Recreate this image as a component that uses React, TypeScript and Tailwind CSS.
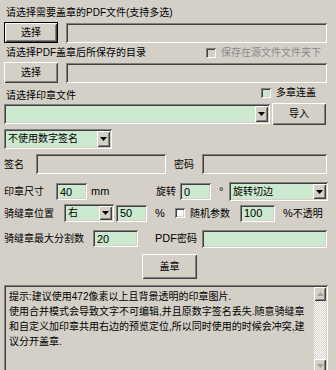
import React from "react";

const SUNK =
  "shadow-[inset_1px_1px_0_#808080,inset_-1px_-1px_0_#fff,inset_2px_2px_0_#404040,inset_-2px_-2px_0_#d4d0c8]";
const RAISED =
  "shadow-[inset_1px_1px_0_#fff,inset_-1px_-1px_0_#404040,inset_2px_2px_0_#d4d0c8,inset_-2px_-2px_0_#808080]";

const Button = ({ label, className = "" }: { label: string; className?: string }) => (
  <div className={`flex items-center justify-center bg-[#d4d0c8] ${RAISED} ${className}`}>
    <span className="leading-[14px]">{label}</span>
  </div>
);

const Field = ({
  value = "",
  className = "",
  green = true,
}: {
  value?: string;
  className?: string;
  green?: boolean;
}) => (
  <div
    className={`flex items-center pl-[4px] ${green ? "bg-[#cce8cf]" : "bg-[#d4d0c8]"} ${SUNK} ${className}`}
  >
    <span className="leading-[14px] text-[11px]">{value}</span>
  </div>
);

const Arrow = ({ color = "#000", up = false }: { color?: string; up?: boolean }) => (
  <svg width="7" height="4" viewBox="0 0 7 4">
    <path d={up ? "M3.5 0 L7 4 L0 4 Z" : "M0 0 L7 0 L3.5 4 Z"} fill={color} />
  </svg>
);

const Combo = ({ value, className = "" }: { value: string; className?: string }) => (
  <div className={`flex items-stretch bg-[#cce8cf] p-[2px] ${SUNK} ${className}`}>
    <div className="flex flex-1 items-center pl-[2px]">
      <span className="leading-[14px]">{value}</span>
    </div>
    <div className={`flex w-[13px] items-center justify-center bg-[#d4d0c8] ${RAISED}`}>
      <Arrow />
    </div>
  </div>
);

const Check = ({ className = "" }: { className?: string }) => (
  <div className={`h-[10px] w-[10px] ${SUNK} ${className}`} />
);

export default function App() {
  return (
    <div className="h-[370px] w-[336px] overflow-hidden bg-[#d4d0c8] text-[10px] text-black font-[Liberation_Sans,Noto_Sans_CJK_SC,sans-serif]">
      <div className="mt-[6px] h-[14px] pl-[6px] leading-[14px]">
        请选择需要盖章的PDF文件(支持多选)
      </div>

      <div className="mt-[2px] flex h-[21px] items-center">
        <div className="ml-[4px] h-[21px] w-[54px] border border-black">
          <Button label="选择" className="h-full w-full" />
        </div>
        <Field green={false} className="ml-[8px] h-[20px] w-[261px]" />
      </div>

      <div className="mt-[3px] flex h-[14px] items-center">
        <div className="w-[200px] pl-[6px] leading-[14px]">请选择PDF盖章后所保存的目录</div>
        <Check className="ml-[6px] bg-[#d4d0c8]" />
        <span className="ml-[5px] leading-[14px] text-[#8a8a8a]">保存在源文件文件夹下</span>
      </div>

      <div className="mt-[2px] flex h-[21px] items-center">
        <Button label="选择" className="ml-[4px] h-[21px] w-[54px]" />
        <Field green={false} className="ml-[8px] h-[20px] w-[261px]" />
      </div>

      <div className="mt-[4px] flex h-[14px] items-center">
        <div className="w-[261px] pl-[6px] pt-[3px] leading-[14px]">请选择印章文件</div>
        <Check className="mb-[3px] bg-[#cce8cf]" />
        <span className="mb-[3px] ml-[5px] leading-[14px]">多章连盖</span>
      </div>

      <div className="mt-[2px] flex h-[22px] items-center">
        <Combo value="" className="ml-[4px] h-[20px] w-[266px]" />
        <Button label="导入" className="ml-[2px] h-[22px] w-[54px]" />
      </div>

      <div className="mt-[4px] flex h-[20px] items-center">
        <Combo value="不使用数字签名" className="ml-[4px] h-[20px] w-[108px]" />
      </div>

      <div className="mt-[5px] flex h-[20px] items-center">
        <span className="w-[36px] pl-[4px]">签名</span>
        <Field green={false} className="h-[20px] w-[130px]" />
        <span className="ml-[8px] w-[28px]">密码</span>
        <Field green={false} className="h-[20px] w-[125px]" />
      </div>

      <div className="mt-[8px] flex h-[19px] items-center">
        <span className="w-[56px] pl-[4px]">印章尺寸</span>
        <Field value="40" className="h-[17px] w-[31px]" />
        <span className="ml-[4px] w-[65px] text-[11px]">mm</span>
        <span className="w-[24px]">旋转</span>
        <Field value="0" className="h-[17px] w-[31px]" />
        <span className="ml-[8px] w-[10px] text-[11px]">°</span>
        <Combo value="旋转切边" className="h-[19px] w-[99px]" />
      </div>

      <div className="mt-[3px] flex h-[18px] items-center">
        <span className="w-[64px] pl-[4px]">骑缝章位置</span>
        <Combo value="右" className="h-[18px] w-[50px]" />
        <Field value="50" className="ml-[2px] h-[17px] w-[31px]" />
        <span className="ml-[8px] w-[20px] text-[11px]">%</span>
        <Check className="bg-white" />
        <span className="ml-[5px] w-[50px]">随机参数</span>
        <Field value="100" className="h-[17px] w-[35px]" />
        <span className="ml-[8px] text-[11px]">
          %<span className="text-[10px]">不透明</span>
        </span>
      </div>

      <div className="mt-[8px] flex h-[17px] items-center">
        <span className="w-[93px] pl-[4px]">骑缝章最大分割数</span>
        <Field value="20" className="h-[17px] w-[45px]" />
        <span className="ml-[17px] w-[47px]">
          <span className="text-[11px]">PDF</span>密码
        </span>
        <Field className="h-[18px] w-[125px]" />
      </div>

      <div className="mt-[7px] flex h-[25px]">
        <Button label="盖章" className="ml-[142px] h-[25px] w-[55px]" />
      </div>

      <div className={`ml-[4px] mt-[6px] flex h-[90px] w-[324px] p-[2px] ${SUNK} bg-[#d4d0c8]`}>
        <div className="flex-1 pl-[3px] pt-[2px] text-[10px] leading-[15px]">
          <div>提示:建议使用472像素以上且背景透明的印章图片.</div>
          <div>使用合并模式会导致文字不可编辑,并且原数字签名丢失.随意骑缝章</div>
          <div>和自定义加印章共用右边的预览定位,所以同时使用的时候会冲突,建</div>
          <div>议分开盖章.</div>
        </div>
        <div className="flex w-[12px] flex-col">
          <div className={`flex h-[14px] items-center justify-center bg-[#d4d0c8] ${RAISED}`}>
            <Arrow up color="#a0a0a0" />
          </div>
          <div className="flex-1 bg-[repeating-conic-gradient(#ffffff_0_25%,#d4d0c8_0_50%)] bg-[length:2px_2px]" />
          <div className={`flex h-[14px] items-center justify-center bg-[#d4d0c8] ${RAISED}`}>
            <Arrow color="#a0a0a0" />
          </div>
        </div>
      </div>
    </div>
  );
}
